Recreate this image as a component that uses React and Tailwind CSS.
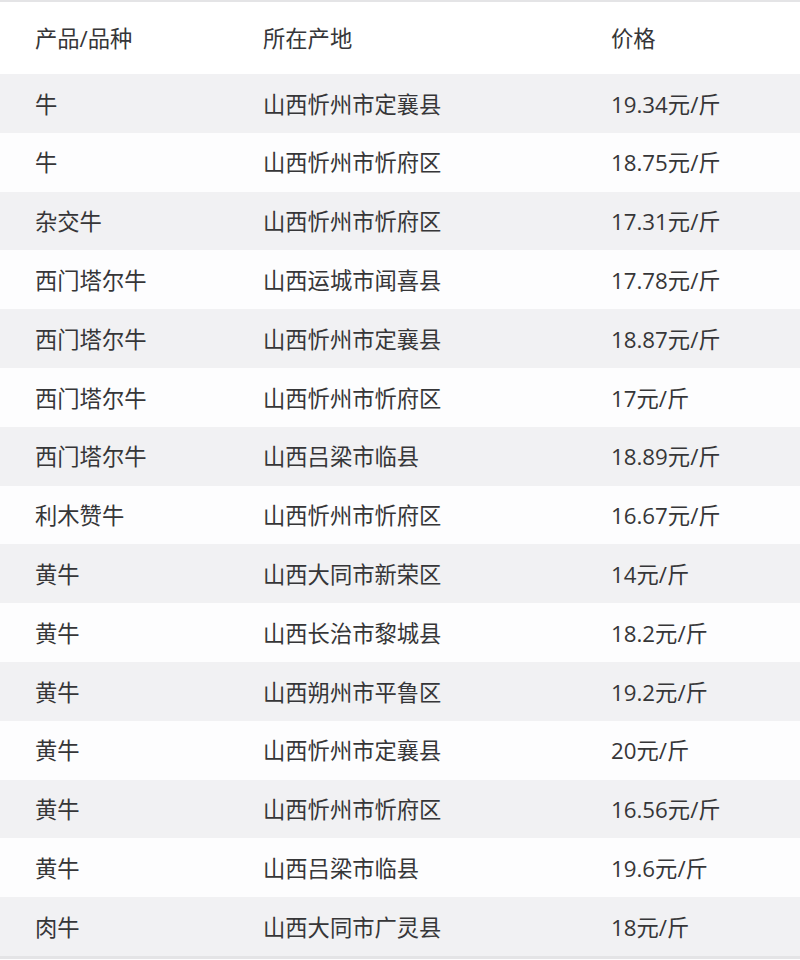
const rows = [
  ["牛", "山西忻州市定襄县", "19.34元/斤"],
  ["牛", "山西忻州市忻府区", "18.75元/斤"],
  ["杂交牛", "山西忻州市忻府区", "17.31元/斤"],
  ["西门塔尔牛", "山西运城市闻喜县", "17.78元/斤"],
  ["西门塔尔牛", "山西忻州市定襄县", "18.87元/斤"],
  ["西门塔尔牛", "山西忻州市忻府区", "17元/斤"],
  ["西门塔尔牛", "山西吕梁市临县", "18.89元/斤"],
  ["利木赞牛", "山西忻州市忻府区", "16.67元/斤"],
  ["黄牛", "山西大同市新荣区", "14元/斤"],
  ["黄牛", "山西长治市黎城县", "18.2元/斤"],
  ["黄牛", "山西朔州市平鲁区", "19.2元/斤"],
  ["黄牛", "山西忻州市定襄县", "20元/斤"],
  ["黄牛", "山西忻州市忻府区", "16.56元/斤"],
  ["黄牛", "山西吕梁市临县", "19.6元/斤"],
  ["肉牛", "山西大同市广灵县", "18元/斤"],
];

const App = () => {
  return (
    <div
      className="w-[800px] h-[960px] overflow-hidden bg-[#fdfdfe] text-[#363638] text-[22.3px]"
      style={{ fontFamily: '"Open Sans", "Noto Sans CJK SC", sans-serif' }}
    >
      <div className="border-t-2 border-[#e4e4e6]">
        {/* Header */}
        <div className="grid grid-cols-[228px_348px_1fr] pl-[35px] pt-[2px] h-[72px] items-center bg-white">
          <div>产品/品种</div>
          <div>所在产地</div>
          <div>价格</div>
        </div>

        {rows.map((row, i) => (
          <div
            key={i}
            className={`grid grid-cols-[228px_348px_1fr] pl-[35px] pt-[2px] h-[58.8px] items-center ${
              i % 2 === 0 ? "bg-[#f1f1f3]" : "bg-[#fdfdfe]"
            }`}
          >
            <div>{row[0]}</div>
            <div>{row[1]}</div>
            <div>{row[2]}</div>
          </div>
        ))}
        <div className="h-[3px] bg-[#e4e4e6]" />
      </div>
    </div>
  );
};

export default App;
